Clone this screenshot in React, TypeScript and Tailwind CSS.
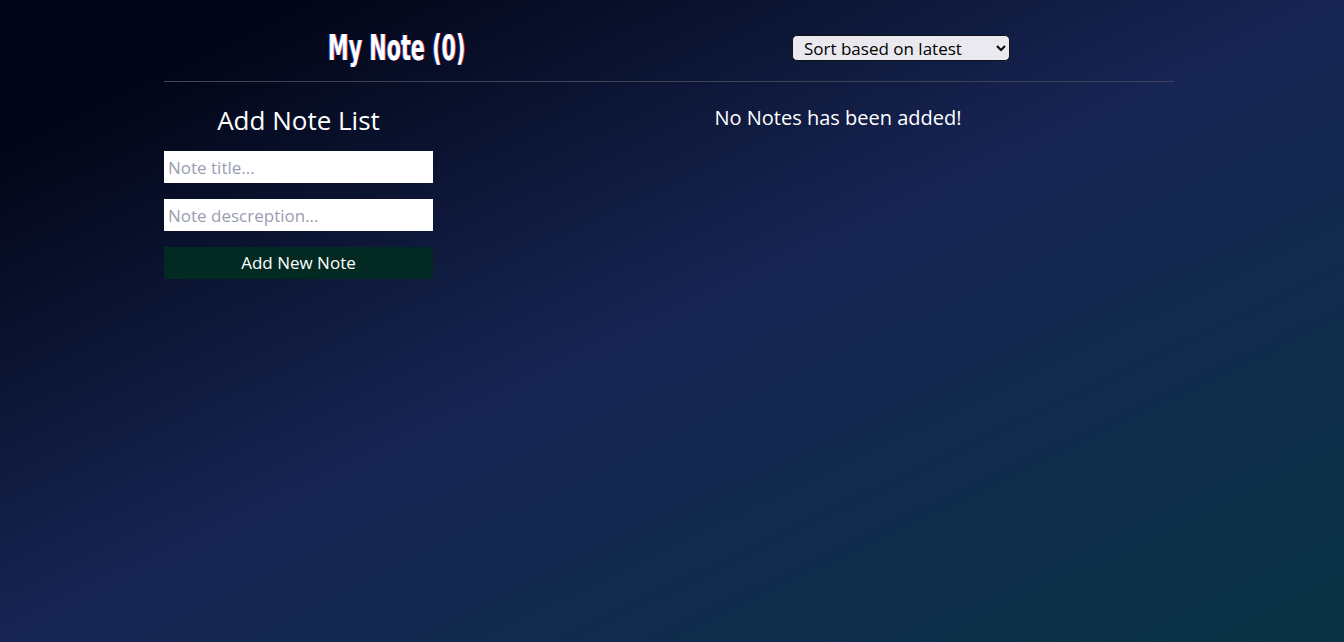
export default function App() {
  const body = { fontFamily: '"Open Sans", "Noto Sans", sans-serif' };
  return (
    <div
      className="min-h-screen w-full bg-[linear-gradient(to_bottom_right,#020617_12%,#172554_50%,#083344)] text-white"
      style={body}
    >
      <div className="ml-[164px] w-[1010px]">
        {/* En-tête */}
        <header className="flex h-[82px] items-center justify-around border-b border-[#3f4356] pt-[14px]">
          <h1 className="w-[136px] text-[36px] font-bold leading-none">
            <span
              className="inline-block origin-left scale-x-[0.64] whitespace-nowrap [text-shadow:-1px_0_#2563eb,1px_0_#dc2626]"
              style={{ fontFamily: '"DejaVu Sans Condensed", "Liberation Sans", sans-serif' }}
            >
              My Note (0)
            </span>
          </h1>
          <select
            className="h-[26px] w-[218px] rounded-[5px] border border-[#111] bg-[#e9e9ef] pl-[7px] text-[17px] leading-none text-black"
            style={body}
            defaultValue="latest"
          >
            <option value="latest">Sort based on latest</option>
            <option value="oldest">Sort based on oldest</option>
          </select>
        </header>

        <main className="flex pt-5">
          {/* Formulaire */}
          <section className="flex w-[269px] flex-col">
            <h2 className="text-center text-[26px] leading-[36px]">Add Note List</h2>
            <input
              className="mt-[13px] h-8 w-full bg-white px-1 text-[17px] text-black outline-none placeholder:text-[#9c9cb0]"
              placeholder="Note title..."
            />
            <input
              className="mt-4 h-8 w-full bg-white px-1 text-[17px] text-black outline-none placeholder:text-[#9c9cb0]"
              placeholder="Note descreption..."
            />
            <button className="mt-4 h-8 w-full bg-[#022a22] text-[17px] text-white">Add New Note</button>
          </section>

          {/* Liste */}
          <section className="ml-[69px] flex-1">
            <p className="pt-[2px] text-center text-[20px] leading-[28px]">No Notes has been added!</p>
          </section>
        </main>
      </div>
    </div>
  );
}
